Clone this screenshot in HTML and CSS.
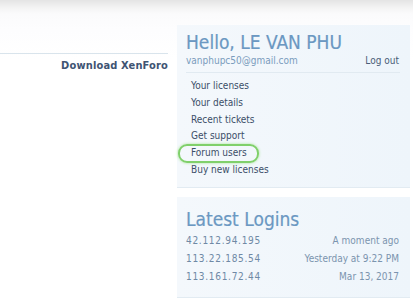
FILE: index.html
```html
<!DOCTYPE html>
<html>
<head>
<meta charset="utf-8">
<link rel="stylesheet" href="styles.css">
</head>
<body>
<div class="page">
  <div class="main">
    <div class="main-rule"></div>
    <div class="download">Download XenForo</div>
  </div>
  <div class="sidebar">
    <div class="panel account">
      <h2 class="hello">Hello, LE VAN PHU</h2>
      <div class="userline">
        <span class="email">vanphupc50@gmail.com</span>
        <span class="logout">Log out</span>
      </div>
      <ul class="links">
        <li>Your licenses</li>
        <li>Your details</li>
        <li>Recent tickets</li>
        <li>Get support</li>
        <li class="hl">Forum users</li>
        <li>Buy new licenses</li>
      </ul>
    </div>
    <div class="panel logins">
      <h2 class="title">Latest Logins</h2>
      <div class="row"><span class="ip">42.112.94.195</span><span class="when">A moment ago</span></div>
      <div class="row"><span class="ip">113.22.185.54</span><span class="when">Yesterday at 9:22 PM</span></div>
      <div class="row"><span class="ip">113.161.72.44</span><span class="when">Mar 13, 2017</span></div>
    </div>
  </div>
</div>
</body>
</html>
```
FILE: styles.css
```css
html, body {
  margin: 0;
  padding: 0;
}
body {
  width: 413px;
  height: 300px;
  overflow: hidden;
  font-family: "DejaVu Sans Condensed", "DejaVu Sans", sans-serif;
  background: linear-gradient(#e4e4e4 0px, #f4f4f4 8px, #fbfbfc 14px, #fdfdfe 30px, #ffffff 60px);
}
.page {
  display: grid;
  grid-template-columns: 177px 233px;
}
.main {
  padding-top: 53px;
  padding-right: 9px;
}
.main-rule {
  height: 1px;
  background: #d9e4ec;
}
.download {
  text-align: right;
  margin-top: 5px;
  font-size: 11px;
  font-weight: bold;
  color: #3f5473;
  letter-spacing: 0.15px;
}
.sidebar {
  padding-top: 25px;
  display: flex;
  flex-direction: column;
  gap: 9px;
}
.panel {
  background: linear-gradient(90deg, #f4f8fc 0%, #eef5fb 100%);
  padding: 0 10px 0 9px;
  border-bottom: 1px solid #e2ebf2;
}
.account {
  height: 162px;
}
.hello, .title {
  margin: 0;
  font-size: 19px;
  font-weight: normal;
  color: #6b98c2;
  line-height: 22px;
  -webkit-text-stroke: 0.2px #6b98c2;
}
.hello {
  padding-top: 6px;
}
.userline {
  display: flex;
  justify-content: space-between;
  font-size: 10px;
  line-height: 14px;
  padding-top: 1px;
  padding-bottom: 4px;
  border-bottom: 1px solid #e1eaf1;
}
.email {
  color: #7a9cbd;
}
.logout {
  color: #4a5d78;
  padding-right: 1px;
}
.links {
  list-style: none;
  margin: 0;
  padding: 5px 0 0 5px;
  font-size: 10px;
  color: #3b4e68;
}
.links li {
  line-height: 16.8px;
}
.hl {
  position: relative;
}
.hl::before {
  content: "";
  position: absolute;
  left: -13px;
  top: -1px;
  width: 77px;
  height: 15px;
  border: 2px solid #80d06b;
  border-radius: 9px;
  box-shadow: 0 0 3px #a8e596;
}
.logins {
  height: 100px;
}
.title {
  padding-top: 11px;
  padding-bottom: 2px;
}
.row {
  display: flex;
  justify-content: space-between;
  font-size: 10px;
  line-height: 18px;
}
.ip {
  color: #6f89a5;
  letter-spacing: 0.7px;
}
.when {
  color: #7b94ae;
  padding-right: 1px;
}
```
